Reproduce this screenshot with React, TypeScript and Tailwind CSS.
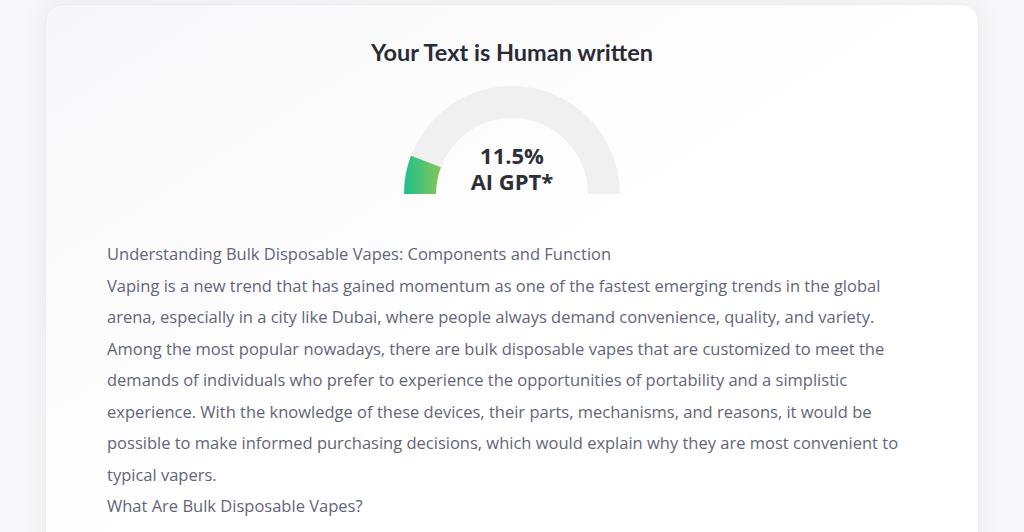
import React from "react";

function Gauge({ value }: { value: number }) {
  const cx = 108;
  const cy = 108;
  const ro = 108;
  const ri = 76;
  const ang = Math.PI - (value / 100) * Math.PI;
  const ox = cx + ro * Math.cos(ang);
  const oy = cy - ro * Math.sin(ang);
  const ix = cx + ri * Math.cos(ang);
  const iy = cy - ri * Math.sin(ang);
  const bg = `M ${cx - ro} ${cy} A ${ro} ${ro} 0 0 1 ${cx + ro} ${cy} L ${cx + ri} ${cy} A ${ri} ${ri} 0 0 0 ${cx - ri} ${cy} Z`;
  const fg = `M ${cx - ro} ${cy} A ${ro} ${ro} 0 0 1 ${ox} ${oy} L ${ix} ${iy} A ${ri} ${ri} 0 0 0 ${cx - ri} ${cy} Z`;
  return (
    <div className="relative w-[216px] h-[108px]">
      <svg width="216" height="108" viewBox="0 0 216 108">
        <defs>
          <linearGradient id="g" x1="0" y1="0" x2="1" y2="0">
            <stop offset="0" stopColor="#1dbf8e" />
            <stop offset="1" stopColor="#86c653" />
          </linearGradient>
        </defs>
        <path d={bg} fill="#f0f0f0" />
        <path d={fg} fill="url(#g)" />
      </svg>
      <div className="absolute left-0 right-0 top-[56px] flex flex-col items-center text-[22px] leading-[26px] font-bold text-[#2e2e38] font-['Open_Sans',sans-serif]">
        <span>{value}%</span>
        <span>AI GPT*</span>
      </div>
    </div>
  );
}

export default function App() {
  return (
    <div className="w-[1024px] h-[532px] overflow-hidden bg-[#f8f8fa] px-[45px] pt-[4px]">
      <div className="h-[600px] rounded-[18px] border border-[#ebebf2] bg-gradient-to-br from-[#f7f7f9] via-white to-white shadow-[0_0_30px_rgba(40,40,90,0.07)] px-[61px] pt-[31px]">
        <h1 className="text-center text-[23.5px] leading-[32px] font-bold text-[#2b2b37] font-['Lato',sans-serif]">
          Your Text is Human written
        </h1>
        <div className="flex justify-center mt-[18px]">
          <Gauge value={11.5} />
        </div>
        <div className="mt-[44px] text-[16.5px] leading-[31.5px] text-[#636579] font-['Open_Sans',sans-serif]">
          <p>Understanding Bulk Disposable Vapes: Components and Function</p>
          <p>
            Vaping is a new trend that has gained momentum as one of the fastest emerging trends in the global arena, especially in a city like Dubai, where people always demand convenience, quality, and variety. Among the most popular nowadays, there are bulk disposable vapes that are customized to meet the demands of individuals who prefer to experience the opportunities of portability and a simplistic experience. With the knowledge of these devices, their parts, mechanisms, and reasons, it would be possible to make informed purchasing decisions, which would explain why they are most convenient to typical vapers.
          </p>
          <p>What Are Bulk Disposable Vapes?</p>
          <p>
            Pre-filled and disposable vapes are the devices available in bulk and are designed to be used and then disposed of once the e-liquid or battery runs out.
          </p>
        </div>
      </div>
    </div>
  );
}
